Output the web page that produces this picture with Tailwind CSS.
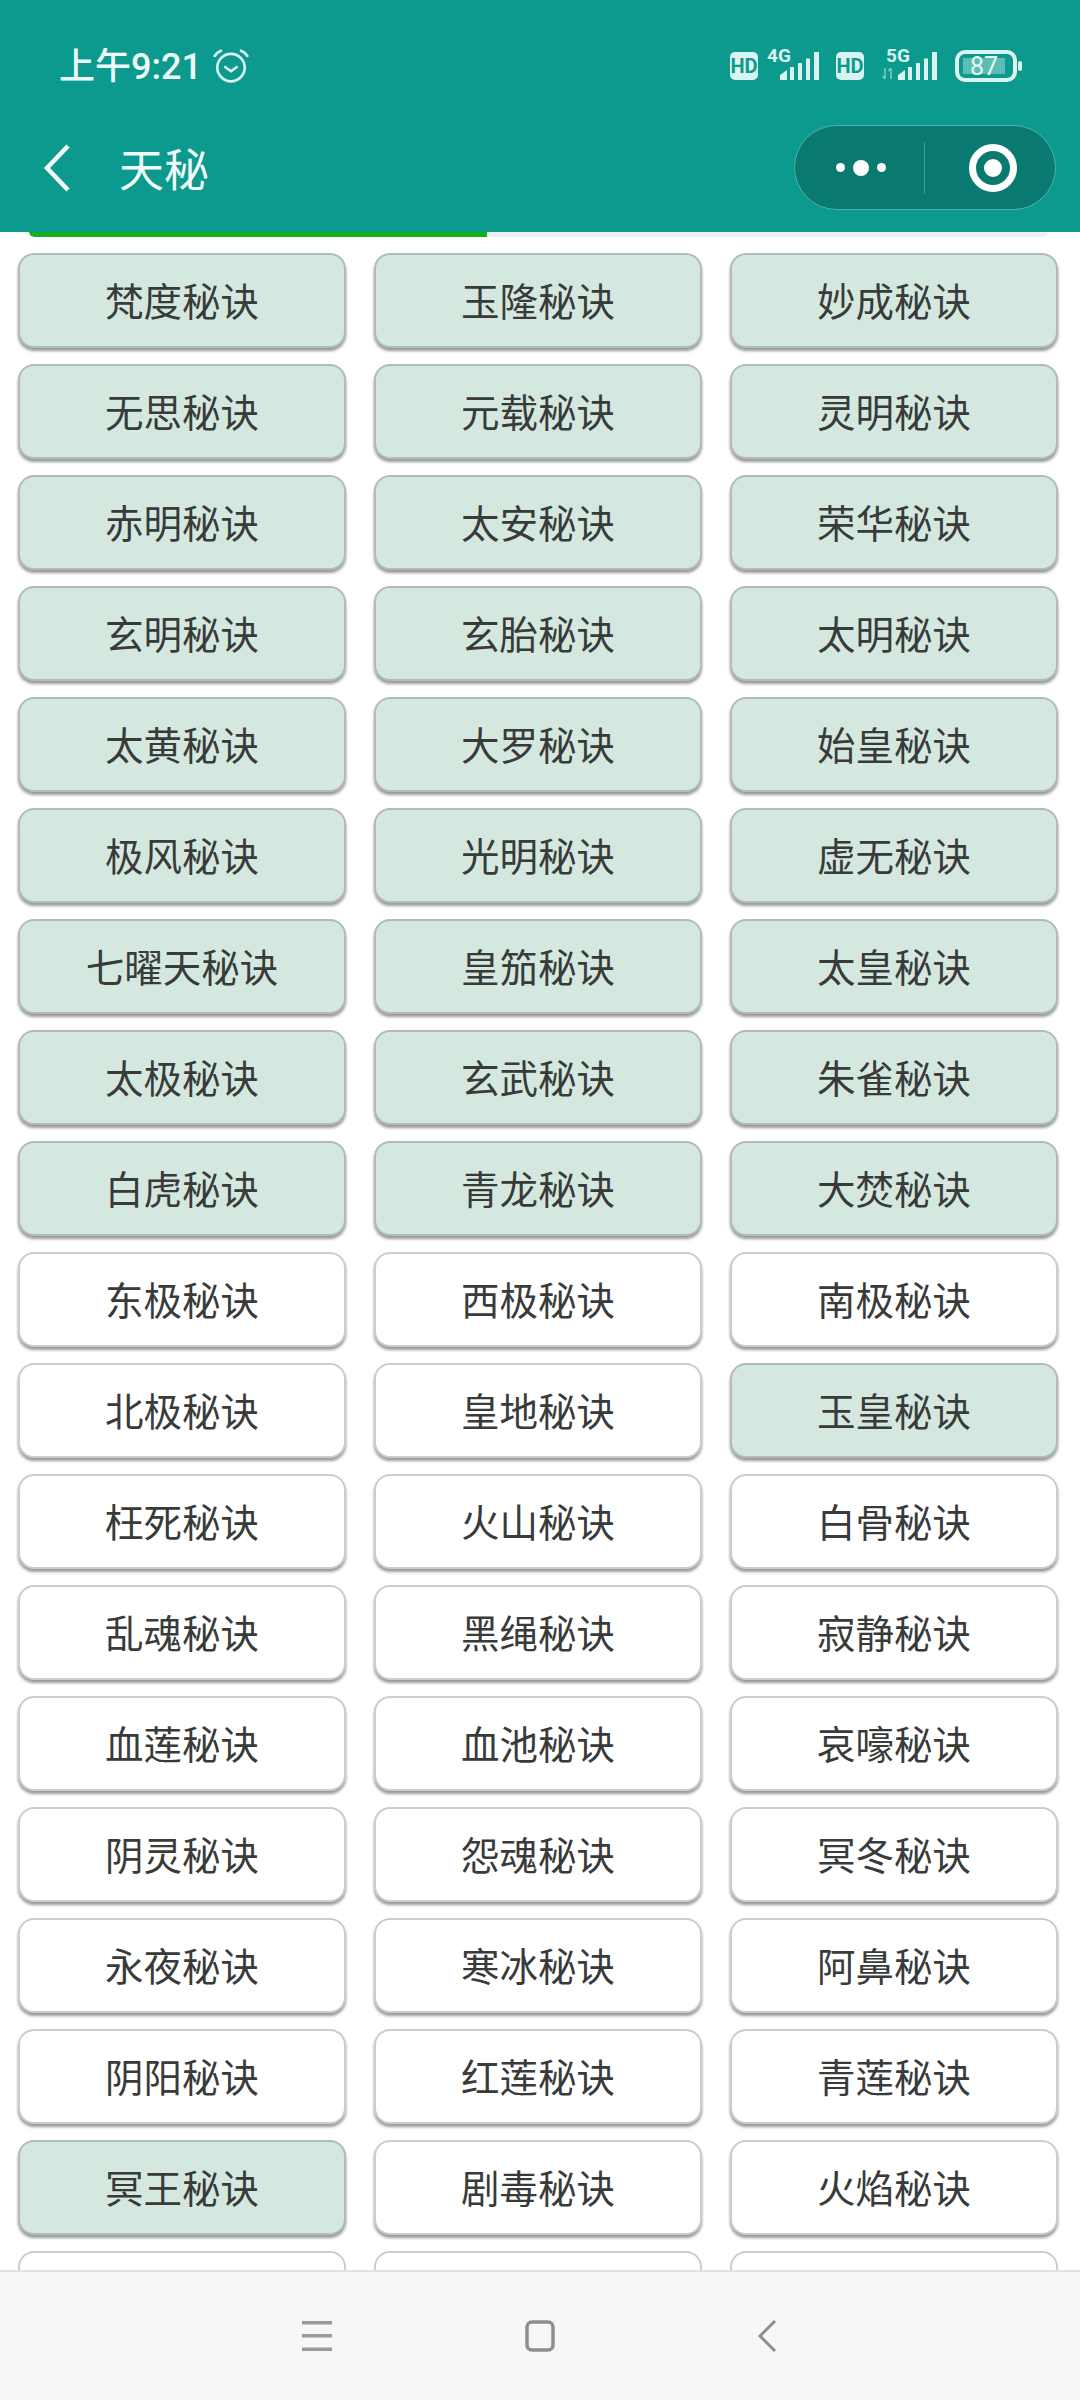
<!doctype html>
<html lang="zh"><head><meta charset="utf-8"><script src="https://cdn.jsdelivr.net/npm/@tailwindcss/browser@4"></script><title>天秘</title></head>
<body class="m-0">
<div class="w-[1080px] h-[2400px] flex flex-col bg-white overflow-hidden font-['Noto_Sans_CJK_SC','Noto_Sans',sans-serif]">
  <header class="h-[232px] shrink-0 bg-[#0c9a8e] text-white flex flex-col">
    <div class="mt-[52px] h-[28px] flex items-center justify-between pl-[59px] pr-[58px]">
      <div class="flex items-center gap-[10px]">
        <span class="text-[36px] leading-[28px] pt-[2px] font-medium text-[#eefaf8] font-['Roboto','Noto_Sans_CJK_SC',sans-serif]">上午9:21</span>
        <svg width="38" height="38" viewBox="0 0 36 36" fill="none" stroke="#d8f3f0" stroke-linecap="round"><circle cx="18" cy="19.500" r="13" stroke-width="2.500"/><path d="M12.500 19l5.500 4 5.500-4" stroke-width="2.500" stroke-linejoin="round"/><path d="M2.500 8.500C4 6 6 4.500 8.500 3.500M33.500 8.500C32 6 30 4.500 27.500 3.500" stroke-width="2.500"/></svg>
      </div>
      <svg width="292" height="44" viewBox="0 -5 292 44" class="block" fill="#d8f3f0">
        <rect x="0" y="3" width="28" height="28" rx="5"/>
        <text x="14" y="24" text-anchor="middle" font-family="Roboto, sans-serif" font-size="20" font-weight="700" fill="#0c9a8e">HD</text>
        <text x="37" y="13" font-family="Roboto, sans-serif" font-size="19" font-weight="700">4G</text>
        <path d="M50 31v-5l7-5v10zM60 31V18h4v13zM68 31V14h4v17zM76 31V9.500h4V31zM84 31V3h5v28z"/>
        <rect x="106" y="3" width="28" height="28" rx="5"/>
        <text x="120" y="24" text-anchor="middle" font-family="Roboto, sans-serif" font-size="20" font-weight="700" fill="#0c9a8e">HD</text>
        <text x="156" y="13" font-family="Roboto, sans-serif" font-size="19" font-weight="700">5G</text>
        <path d="M155 19v11m-2.500-3l2.500 3M161 30V19m-2.500 3l2.500-3" stroke="#d8f3f0" stroke-opacity="0.55" stroke-width="1.500" fill="none"/>
        <path d="M168 31v-5l7-5v10zM178 31V18h4v13zM186 31V14h4v17zM194 31V9.500h4V31zM202 31V3h5v28z"/>
        <rect x="227" y="3" width="58" height="28" rx="8" fill="none" stroke="#d8f3f0" stroke-width="4"/>
        <rect x="233" y="9" width="42" height="16" fill="#d8f3f0" fill-opacity="0.4"/>
        <text x="254" y="26" text-anchor="middle" font-family="Roboto, sans-serif" font-size="25" fill="#e4f7f5">87</text>
        <rect x="288" y="12" width="4" height="10" rx="2"/>
      </svg>
    </div>
    <div class="mt-[45px] h-[85px] flex items-center">
      <svg width="30" height="50" viewBox="0 0 30 50" class="ml-[43px]" fill="none" stroke="#f2fbfa" stroke-width="4.500"><path d="M25 3L4 25l21 22"/></svg>
      <h1 class="ml-[46px] text-[45px] font-normal leading-none text-[#f2fbfa]">天秘</h1>
      <div class="ml-auto mr-[24px] w-[262px] h-[85px] rounded-full bg-[#0a7a70] border border-[#4db3a9] flex items-center">
        <div class="w-[129px] flex items-center justify-end gap-[8px] pr-[38px]">
          <span class="w-[9px] h-[9px] rounded-full bg-white"></span>
          <span class="w-[16px] h-[16px] rounded-full bg-white"></span>
          <span class="w-[9px] h-[9px] rounded-full bg-white"></span>
        </div>
        <div class="w-px h-[52px] bg-[#3f9f96]"></div>
        <div class="flex-1 flex justify-center pl-[6px]">
          <div class="w-[48px] h-[48px] rounded-full border-[7px] border-white flex items-center justify-center"><span class="w-[18px] h-[18px] rounded-full bg-white"></span></div>
        </div>
      </div>
    </div>
  </header>
  <div class="h-[5px] shrink-0 mr-[32px] ml-[29px] bg-[#eeeeee] rounded-b-[5px] overflow-hidden"><div class="h-full w-[458px] bg-[#13b01d] rounded-bl-[5px]"></div></div>
  <main class="flex-1 min-h-0 overflow-hidden pt-[16px] pl-[18px] pr-[22px]">
    <div class="grid grid-cols-3 gap-x-[28px] gap-y-[16px] text-[38.5px] text-[#383b39]">
      <div class="h-[95px] pb-[2px] flex items-center justify-center rounded-[16px] border-2 border-[#b0bcb7] bg-[#d5e8e0] shadow-[0_3px_3px_rgba(0,0,0,0.4)]">梵度秘诀</div>
      <div class="h-[95px] pb-[2px] flex items-center justify-center rounded-[16px] border-2 border-[#b0bcb7] bg-[#d5e8e0] shadow-[0_3px_3px_rgba(0,0,0,0.4)]">玉隆秘诀</div>
      <div class="h-[95px] pb-[2px] flex items-center justify-center rounded-[16px] border-2 border-[#b0bcb7] bg-[#d5e8e0] shadow-[0_3px_3px_rgba(0,0,0,0.4)]">妙成秘诀</div>
      <div class="h-[95px] pb-[2px] flex items-center justify-center rounded-[16px] border-2 border-[#b0bcb7] bg-[#d5e8e0] shadow-[0_3px_3px_rgba(0,0,0,0.4)]">无思秘诀</div>
      <div class="h-[95px] pb-[2px] flex items-center justify-center rounded-[16px] border-2 border-[#b0bcb7] bg-[#d5e8e0] shadow-[0_3px_3px_rgba(0,0,0,0.4)]">元载秘诀</div>
      <div class="h-[95px] pb-[2px] flex items-center justify-center rounded-[16px] border-2 border-[#b0bcb7] bg-[#d5e8e0] shadow-[0_3px_3px_rgba(0,0,0,0.4)]">灵明秘诀</div>
      <div class="h-[95px] pb-[2px] flex items-center justify-center rounded-[16px] border-2 border-[#b0bcb7] bg-[#d5e8e0] shadow-[0_3px_3px_rgba(0,0,0,0.4)]">赤明秘诀</div>
      <div class="h-[95px] pb-[2px] flex items-center justify-center rounded-[16px] border-2 border-[#b0bcb7] bg-[#d5e8e0] shadow-[0_3px_3px_rgba(0,0,0,0.4)]">太安秘诀</div>
      <div class="h-[95px] pb-[2px] flex items-center justify-center rounded-[16px] border-2 border-[#b0bcb7] bg-[#d5e8e0] shadow-[0_3px_3px_rgba(0,0,0,0.4)]">荣华秘诀</div>
      <div class="h-[95px] pb-[2px] flex items-center justify-center rounded-[16px] border-2 border-[#b0bcb7] bg-[#d5e8e0] shadow-[0_3px_3px_rgba(0,0,0,0.4)]">玄明秘诀</div>
      <div class="h-[95px] pb-[2px] flex items-center justify-center rounded-[16px] border-2 border-[#b0bcb7] bg-[#d5e8e0] shadow-[0_3px_3px_rgba(0,0,0,0.4)]">玄胎秘诀</div>
      <div class="h-[95px] pb-[2px] flex items-center justify-center rounded-[16px] border-2 border-[#b0bcb7] bg-[#d5e8e0] shadow-[0_3px_3px_rgba(0,0,0,0.4)]">太明秘诀</div>
      <div class="h-[95px] pb-[2px] flex items-center justify-center rounded-[16px] border-2 border-[#b0bcb7] bg-[#d5e8e0] shadow-[0_3px_3px_rgba(0,0,0,0.4)]">太黄秘诀</div>
      <div class="h-[95px] pb-[2px] flex items-center justify-center rounded-[16px] border-2 border-[#b0bcb7] bg-[#d5e8e0] shadow-[0_3px_3px_rgba(0,0,0,0.4)]">大罗秘诀</div>
      <div class="h-[95px] pb-[2px] flex items-center justify-center rounded-[16px] border-2 border-[#b0bcb7] bg-[#d5e8e0] shadow-[0_3px_3px_rgba(0,0,0,0.4)]">始皇秘诀</div>
      <div class="h-[95px] pb-[2px] flex items-center justify-center rounded-[16px] border-2 border-[#b0bcb7] bg-[#d5e8e0] shadow-[0_3px_3px_rgba(0,0,0,0.4)]">极风秘诀</div>
      <div class="h-[95px] pb-[2px] flex items-center justify-center rounded-[16px] border-2 border-[#b0bcb7] bg-[#d5e8e0] shadow-[0_3px_3px_rgba(0,0,0,0.4)]">光明秘诀</div>
      <div class="h-[95px] pb-[2px] flex items-center justify-center rounded-[16px] border-2 border-[#b0bcb7] bg-[#d5e8e0] shadow-[0_3px_3px_rgba(0,0,0,0.4)]">虚无秘诀</div>
      <div class="h-[95px] pb-[2px] flex items-center justify-center rounded-[16px] border-2 border-[#b0bcb7] bg-[#d5e8e0] shadow-[0_3px_3px_rgba(0,0,0,0.4)]">七曜天秘诀</div>
      <div class="h-[95px] pb-[2px] flex items-center justify-center rounded-[16px] border-2 border-[#b0bcb7] bg-[#d5e8e0] shadow-[0_3px_3px_rgba(0,0,0,0.4)]">皇笳秘诀</div>
      <div class="h-[95px] pb-[2px] flex items-center justify-center rounded-[16px] border-2 border-[#b0bcb7] bg-[#d5e8e0] shadow-[0_3px_3px_rgba(0,0,0,0.4)]">太皇秘诀</div>
      <div class="h-[95px] pb-[2px] flex items-center justify-center rounded-[16px] border-2 border-[#b0bcb7] bg-[#d5e8e0] shadow-[0_3px_3px_rgba(0,0,0,0.4)]">太极秘诀</div>
      <div class="h-[95px] pb-[2px] flex items-center justify-center rounded-[16px] border-2 border-[#b0bcb7] bg-[#d5e8e0] shadow-[0_3px_3px_rgba(0,0,0,0.4)]">玄武秘诀</div>
      <div class="h-[95px] pb-[2px] flex items-center justify-center rounded-[16px] border-2 border-[#b0bcb7] bg-[#d5e8e0] shadow-[0_3px_3px_rgba(0,0,0,0.4)]">朱雀秘诀</div>
      <div class="h-[95px] pb-[2px] flex items-center justify-center rounded-[16px] border-2 border-[#b0bcb7] bg-[#d5e8e0] shadow-[0_3px_3px_rgba(0,0,0,0.4)]">白虎秘诀</div>
      <div class="h-[95px] pb-[2px] flex items-center justify-center rounded-[16px] border-2 border-[#b0bcb7] bg-[#d5e8e0] shadow-[0_3px_3px_rgba(0,0,0,0.4)]">青龙秘诀</div>
      <div class="h-[95px] pb-[2px] flex items-center justify-center rounded-[16px] border-2 border-[#b0bcb7] bg-[#d5e8e0] shadow-[0_3px_3px_rgba(0,0,0,0.4)]">大焚秘诀</div>
      <div class="h-[95px] pb-[2px] flex items-center justify-center rounded-[16px] border-2 border-[#cccccc] bg-white shadow-[0_3px_3px_rgba(0,0,0,0.4)]">东极秘诀</div>
      <div class="h-[95px] pb-[2px] flex items-center justify-center rounded-[16px] border-2 border-[#cccccc] bg-white shadow-[0_3px_3px_rgba(0,0,0,0.4)]">西极秘诀</div>
      <div class="h-[95px] pb-[2px] flex items-center justify-center rounded-[16px] border-2 border-[#cccccc] bg-white shadow-[0_3px_3px_rgba(0,0,0,0.4)]">南极秘诀</div>
      <div class="h-[95px] pb-[2px] flex items-center justify-center rounded-[16px] border-2 border-[#cccccc] bg-white shadow-[0_3px_3px_rgba(0,0,0,0.4)]">北极秘诀</div>
      <div class="h-[95px] pb-[2px] flex items-center justify-center rounded-[16px] border-2 border-[#cccccc] bg-white shadow-[0_3px_3px_rgba(0,0,0,0.4)]">皇地秘诀</div>
      <div class="h-[95px] pb-[2px] flex items-center justify-center rounded-[16px] border-2 border-[#b0bcb7] bg-[#d5e8e0] shadow-[0_3px_3px_rgba(0,0,0,0.4)]">玉皇秘诀</div>
      <div class="h-[95px] pb-[2px] flex items-center justify-center rounded-[16px] border-2 border-[#cccccc] bg-white shadow-[0_3px_3px_rgba(0,0,0,0.4)]">枉死秘诀</div>
      <div class="h-[95px] pb-[2px] flex items-center justify-center rounded-[16px] border-2 border-[#cccccc] bg-white shadow-[0_3px_3px_rgba(0,0,0,0.4)]">火山秘诀</div>
      <div class="h-[95px] pb-[2px] flex items-center justify-center rounded-[16px] border-2 border-[#cccccc] bg-white shadow-[0_3px_3px_rgba(0,0,0,0.4)]">白骨秘诀</div>
      <div class="h-[95px] pb-[2px] flex items-center justify-center rounded-[16px] border-2 border-[#cccccc] bg-white shadow-[0_3px_3px_rgba(0,0,0,0.4)]">乱魂秘诀</div>
      <div class="h-[95px] pb-[2px] flex items-center justify-center rounded-[16px] border-2 border-[#cccccc] bg-white shadow-[0_3px_3px_rgba(0,0,0,0.4)]">黑绳秘诀</div>
      <div class="h-[95px] pb-[2px] flex items-center justify-center rounded-[16px] border-2 border-[#cccccc] bg-white shadow-[0_3px_3px_rgba(0,0,0,0.4)]">寂静秘诀</div>
      <div class="h-[95px] pb-[2px] flex items-center justify-center rounded-[16px] border-2 border-[#cccccc] bg-white shadow-[0_3px_3px_rgba(0,0,0,0.4)]">血莲秘诀</div>
      <div class="h-[95px] pb-[2px] flex items-center justify-center rounded-[16px] border-2 border-[#cccccc] bg-white shadow-[0_3px_3px_rgba(0,0,0,0.4)]">血池秘诀</div>
      <div class="h-[95px] pb-[2px] flex items-center justify-center rounded-[16px] border-2 border-[#cccccc] bg-white shadow-[0_3px_3px_rgba(0,0,0,0.4)]">哀嚎秘诀</div>
      <div class="h-[95px] pb-[2px] flex items-center justify-center rounded-[16px] border-2 border-[#cccccc] bg-white shadow-[0_3px_3px_rgba(0,0,0,0.4)]">阴灵秘诀</div>
      <div class="h-[95px] pb-[2px] flex items-center justify-center rounded-[16px] border-2 border-[#cccccc] bg-white shadow-[0_3px_3px_rgba(0,0,0,0.4)]">怨魂秘诀</div>
      <div class="h-[95px] pb-[2px] flex items-center justify-center rounded-[16px] border-2 border-[#cccccc] bg-white shadow-[0_3px_3px_rgba(0,0,0,0.4)]">冥冬秘诀</div>
      <div class="h-[95px] pb-[2px] flex items-center justify-center rounded-[16px] border-2 border-[#cccccc] bg-white shadow-[0_3px_3px_rgba(0,0,0,0.4)]">永夜秘诀</div>
      <div class="h-[95px] pb-[2px] flex items-center justify-center rounded-[16px] border-2 border-[#cccccc] bg-white shadow-[0_3px_3px_rgba(0,0,0,0.4)]">寒冰秘诀</div>
      <div class="h-[95px] pb-[2px] flex items-center justify-center rounded-[16px] border-2 border-[#cccccc] bg-white shadow-[0_3px_3px_rgba(0,0,0,0.4)]">阿鼻秘诀</div>
      <div class="h-[95px] pb-[2px] flex items-center justify-center rounded-[16px] border-2 border-[#cccccc] bg-white shadow-[0_3px_3px_rgba(0,0,0,0.4)]">阴阳秘诀</div>
      <div class="h-[95px] pb-[2px] flex items-center justify-center rounded-[16px] border-2 border-[#cccccc] bg-white shadow-[0_3px_3px_rgba(0,0,0,0.4)]">红莲秘诀</div>
      <div class="h-[95px] pb-[2px] flex items-center justify-center rounded-[16px] border-2 border-[#cccccc] bg-white shadow-[0_3px_3px_rgba(0,0,0,0.4)]">青莲秘诀</div>
      <div class="h-[95px] pb-[2px] flex items-center justify-center rounded-[16px] border-2 border-[#b0bcb7] bg-[#d5e8e0] shadow-[0_3px_3px_rgba(0,0,0,0.4)]">冥王秘诀</div>
      <div class="h-[95px] pb-[2px] flex items-center justify-center rounded-[16px] border-2 border-[#cccccc] bg-white shadow-[0_3px_3px_rgba(0,0,0,0.4)]">剧毒秘诀</div>
      <div class="h-[95px] pb-[2px] flex items-center justify-center rounded-[16px] border-2 border-[#cccccc] bg-white shadow-[0_3px_3px_rgba(0,0,0,0.4)]">火焰秘诀</div>
      <div class="h-[95px] rounded-[16px] border-2 border-[#cccccc] bg-white"></div>
      <div class="h-[95px] rounded-[16px] border-2 border-[#cccccc] bg-white"></div>
      <div class="h-[95px] rounded-[16px] border-2 border-[#cccccc] bg-white"></div>
    </div>
  </main>
  <nav class="h-[130px] shrink-0 bg-[#f7f7f7] border-t-2 border-[#e2e2e2] flex items-center pl-[302px] gap-[193px]">
    <svg width="30" height="30" viewBox="0 0 30 30" fill="#9a9a9a"><rect y="0" width="30" height="3.500"/><rect y="13" width="30" height="3.500"/><rect y="26.500" width="30" height="3.500"/></svg>
    <svg width="30" height="32" viewBox="0 0 30 32" fill="none" stroke="#8e8e8e" stroke-width="3.500"><rect x="2" y="2" width="26" height="28" rx="5"/></svg>
    <svg width="20" height="32" viewBox="0 0 20 32" class="ml-[10px]" fill="none" stroke="#8e8e8e" stroke-width="3"><path d="M17 1L2 16l15 15"/></svg>
  </nav>
</div>
</body></html>
